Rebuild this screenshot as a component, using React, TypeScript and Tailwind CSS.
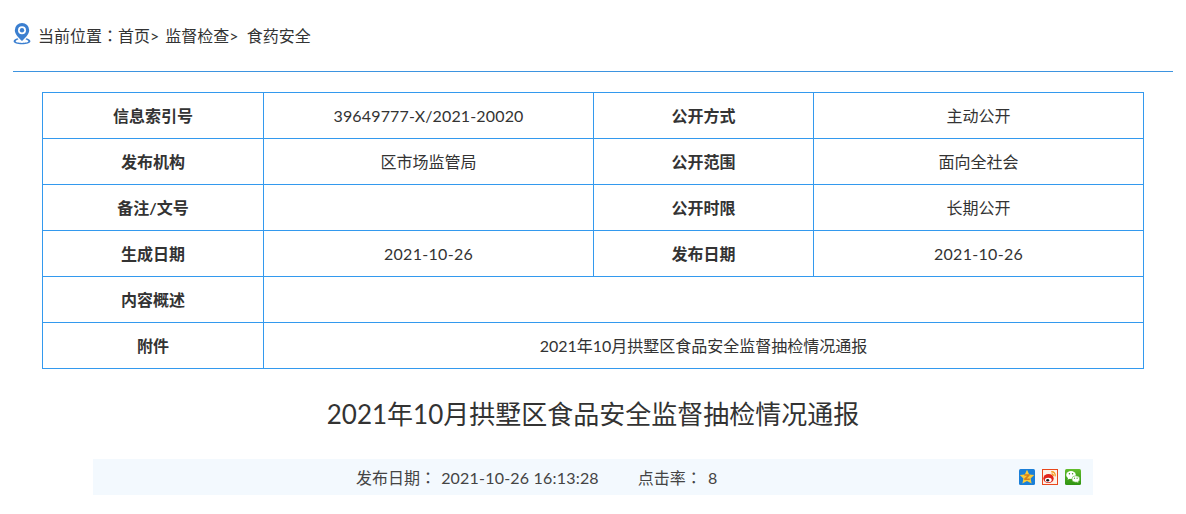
import React from 'react';

const font = "font-['Lato','Noto_Sans_CJK_SC',sans-serif]";

const Label: React.FC<{ children: React.ReactNode }> = ({ children }) => (
  <td className="border border-[#3399ee] text-center font-bold text-[#333] text-[16px]">{children}</td>
);

const Value: React.FC<{ children?: React.ReactNode; colSpan?: number }> = ({ children, colSpan }) => (
  <td colSpan={colSpan} className="border border-[#3399ee] text-center text-[#333] text-[16px]">
    {children}
  </td>
);

// fullwidth colon sits centred in the reference, the TC face draws it that way
const Colon = () => <span className="font-['Noto_Sans_CJK_TC']">：</span>;

const PinIcon = () => (
  <svg width="18" height="23" viewBox="0 0 18 23" className="shrink-0">
    <path d="M9 1a7.200 7.200 0 0 0-7.200 7.200C1.800 12.500 6.300 16 9 19c2.700-3 7.200-6.500 7.200-10.800A7.200 7.200 0 0 0 9 1z" fill="#3b7fd0" />
    <circle cx="9" cy="8.200" r="4" fill="#fff" />
    <circle cx="9" cy="8.200" r="2.200" fill="#3b7fd0" />
    <path d="M4.500 16.300C2.400 17 .6 18 .6 19.300c0 1.900 3.800 3 8.400 3s8.400-1.100 8.400-3c0-1.300-1.800-2.300-3.900-3l-1 1c1.400.5 2.900 1.200 2.900 2 0 .9-2.900 1.600-6.400 1.600s-6.400-.7-6.400-1.600c0-.8 1.500-1.500 2.900-2z" fill="#3b7fd0" />
  </svg>
);

const QzoneIcon = () => (
  <svg width="16" height="16" viewBox="0 0 16 16">
    <rect width="16" height="16" rx="1.500" fill="#1a7fd8" />
    <path d="M8 .8l2.200 4.600 5 .7-3.600 3.400 1 5L8 12.100 3.400 14.500l1-5L.8 6.100l5-.7z" fill="#f8cb3a" />
    <path d="M5.300 5.300h5.400v1.300L7.700 9.500h3.100v1.400H5.200V9.600l3-2.900H5.300z" fill="#d2801c" />
  </svg>
);

const WeiboIcon = () => (
  <svg width="16" height="16" viewBox="0 0 16 16">
    <rect x=".5" y=".5" width="15" height="15" fill="#fdf1e8" stroke="#e8481c" />
    <ellipse cx="6.500" cy="9.500" rx="5.200" ry="4.500" fill="#e2231a" />
    <ellipse cx="6.300" cy="11" rx="3.400" ry="2.200" fill="#fff" />
    <ellipse cx="5.700" cy="11.200" rx="1.500" ry="1.200" fill="#1c1c1c" />
    <path d="M9.200 2.800c2.800-.3 4.500 1.700 3.900 4.500M9.500 5c1.300-.1 2 .8 1.700 2" fill="none" stroke="#f39a1e" strokeWidth="1.300" />
  </svg>
);

const WechatIcon = () => (
  <svg width="16" height="16" viewBox="0 0 16 16">
    <defs>
      <linearGradient id="wx" x1="0" y1="0" x2="0" y2="1">
        <stop offset="0" stopColor="#62bd2c" />
        <stop offset="1" stopColor="#2f9412" />
      </linearGradient>
    </defs>
    <rect width="16" height="16" rx="1.500" fill="url(#wx)" />
    <ellipse cx="6" cy="6" rx="4.800" ry="4" fill="#fff" />
    <path d="M3.200 8.500l-.7 2.200 2.600-1.200z" fill="#fff" />
    <ellipse cx="10.800" cy="10" rx="3.900" ry="3.200" fill="#fff" stroke="#4aa81e" strokeWidth=".5" />
    <path d="M12.600 12.300l.9 1.500-2.400-1z" fill="#fff" />
    <circle cx="4.400" cy="4.800" r=".7" fill="#3a9a16" />
    <circle cx="7.600" cy="4.800" r=".7" fill="#3a9a16" />
    <circle cx="9.500" cy="9.200" r=".6" fill="#3a9a16" />
    <circle cx="12.100" cy="9.200" r=".6" fill="#3a9a16" />
  </svg>
);

export default function App() {
  return (
    <div className={`${font} w-[1186px] h-[514px] overflow-hidden bg-white`}>
      <div className="mx-[13px] h-[72px] border-b border-[#3d94e0] pt-[22px] flex items-start gap-[7px] text-[16px] text-[#333]">
        <PinIcon />
        <span className="leading-[26px] whitespace-pre">
          当前位置<Colon />首页&gt;<span className="ml-[6px]">监督检查&gt;</span>  食药安全
        </span>
      </div>

      <table className="ml-[42px] mt-[20px] w-[1101px] h-[277px] border-collapse table-fixed">
        <colgroup>
          <col className="w-[221px]" />
          <col className="w-[330px]" />
          <col className="w-[220px]" />
          <col className="w-[330px]" />
        </colgroup>
        <tbody>
          <tr className="h-[46px]">
            <Label>信息索引号</Label>
            <Value><span className="tracking-[0.15px]">39649777-X/2021-20020</span></Value>
            <Label>公开方式</Label>
            <Value>主动公开</Value>
          </tr>
          <tr className="h-[46px]">
            <Label>发布机构</Label>
            <Value>区市场监管局</Value>
            <Label>公开范围</Label>
            <Value>面向全社会</Value>
          </tr>
          <tr className="h-[46px]">
            <Label>备注/文号</Label>
            <Value />
            <Label>公开时限</Label>
            <Value>长期公开</Value>
          </tr>
          <tr className="h-[46px]">
            <Label>生成日期</Label>
            <Value><span className="tracking-[0.3px]">2021-10-26</span></Value>
            <Label>发布日期</Label>
            <Value><span className="tracking-[0.3px]">2021-10-26</span></Value>
          </tr>
          <tr className="h-[46px]">
            <Label>内容概述</Label>
            <Value colSpan={3} />
          </tr>
          <tr className="h-[46px]">
            <Label>附件</Label>
            <Value colSpan={3}>2021年10月拱墅区食品安全监督抽检情况通报</Value>
          </tr>
        </tbody>
      </table>

      <h1 className="mt-[25px] text-center text-[26px] leading-[40px] font-normal text-[#333]">
        2021年10月拱墅区食品安全监督抽检情况通报
      </h1>

      <div className="mx-[93px] mt-[25px] h-[36px] w-[1000px] bg-[#f3f9fe] flex items-center text-[16px] text-[#444] pr-[12px]">
        <div className="ml-[263px] flex gap-[39px] whitespace-pre">
          <span>发布日期<Colon /> <span className="ml-[1px] tracking-[0.2px]">2021-10-26 16:13:28</span></span>
          <span>点击率<Colon /> <span className="ml-[2px]">8</span></span>
        </div>
        <div className="ml-auto flex items-center gap-[7px]">
          <QzoneIcon />
          <WeiboIcon />
          <WechatIcon />
        </div>
      </div>
    </div>
  );
}
